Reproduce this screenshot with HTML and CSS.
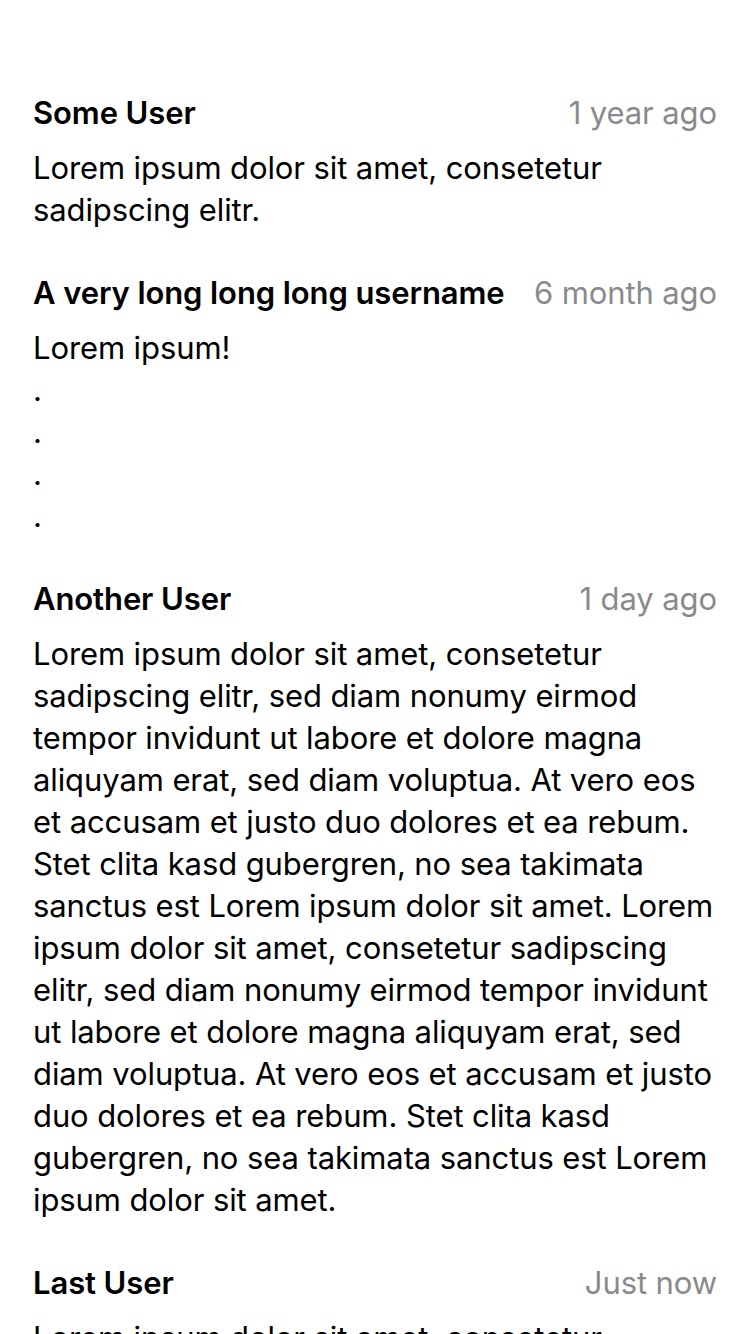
FILE: index.html
```html
<!DOCTYPE html>
<html>
<head>
<meta charset="utf-8">
<link rel="stylesheet" href="styles.css">
</head>
<body>
<div class="list">
  <div class="comment">
    <div class="head"><span class="user">Some User</span><span class="time">1 year ago</span></div>
    <div class="body">Lorem ipsum dolor sit amet, consetetur sadipscing elitr.</div>
  </div>
  <div class="comment">
    <div class="head"><span class="user">A very long long long username</span><span class="time">6 month ago</span></div>
    <div class="body">Lorem ipsum!<br>.<br>.<br>.<br>.</div>
  </div>
  <div class="comment">
    <div class="head"><span class="user">Another User</span><span class="time">1 day ago</span></div>
    <div class="body">Lorem ipsum dolor sit amet, consetetur sadipscing elitr, sed diam nonumy eirmod tempor invidunt ut labore et dolore magna aliquyam erat, sed diam voluptua. At vero eos et accusam et justo duo dolores et ea rebum. Stet clita kasd gubergren, no sea takimata sanctus est Lorem ipsum dolor sit amet. Lorem ipsum dolor sit amet, consetetur sadipscing elitr, sed diam nonumy eirmod tempor invidunt ut labore et dolore magna aliquyam erat, sed diam voluptua. At vero eos et accusam et justo duo dolores et ea rebum. Stet clita kasd gubergren, no sea takimata sanctus est Lorem ipsum dolor sit amet.</div>
  </div>
  <div class="comment">
    <div class="head"><span class="user">Last User</span><span class="time">Just now</span></div>
    <div class="body">Lorem ipsum dolor sit amet, consetetur sadipscing elitr.</div>
  </div>
</div>
</body>
</html>
```
FILE: styles.css
```css
html, body {
  margin: 0;
  padding: 0;
  background: #fff;
  overflow: hidden;
}
body {
  font-family: Inter, "Noto Sans", sans-serif;
  color: #000;
  font-size: 31px;
  line-height: 42px;
  letter-spacing: -0.1px;
}
.list {
  padding: 92px 33px 0 33px;
  display: flex;
  flex-direction: column;
  gap: 41px;
}
.head {
  display: flex;
  justify-content: space-between;
  align-items: baseline;
  gap: 28px;
  margin-bottom: 13px;
}
.user {
  font-weight: 600;
  white-space: nowrap;
}
.time {
  color: #8a8a8e;
  white-space: nowrap;
}
.body {
  margin: 0;
}
```
